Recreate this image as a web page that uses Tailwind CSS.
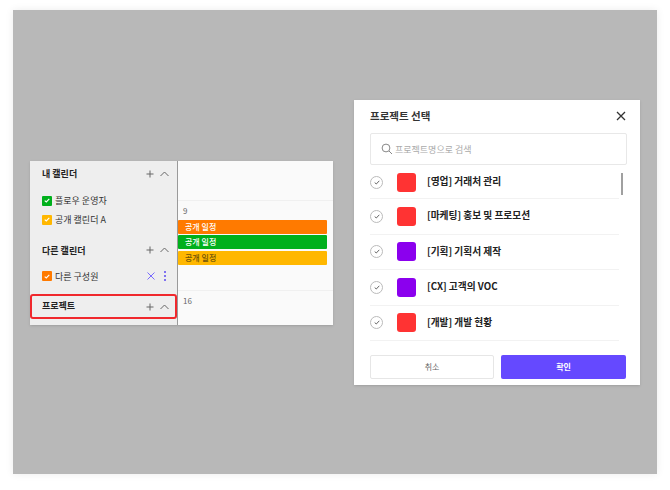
<!DOCTYPE html>
<html>
<head>
  <meta charset="UTF-8" />
  <script src="https://cdn.jsdelivr.net/npm/@tailwindcss/browser@4"></script>
</head>
<body class="bg-white">
<div class="w-[670px] h-[490px] overflow-hidden pt-[10px] pl-[13px] font-['Noto_Sans_CJK_KR','Noto_Sans',sans-serif]">
  <div class="w-[644px] h-[464px] bg-[#b8b8b8] shadow-[0_0_8px_rgba(0,0,0,0.08)] flex items-start pl-[17px] pt-[90px]">

    <!-- calendar -->
    <div class="mt-[61px] w-[303px] h-[164px] flex bg-[#fafafa] shadow-sm">
      <div class="w-[147px] bg-[#eeeeee] shrink-0 flex flex-col">
        <div class="h-[25px] pl-[12px] pr-[8px] flex items-center justify-between">
          <span class="text-[9px] font-bold text-[#222] leading-none">내 캘린더</span>
          <div class="flex items-center gap-[6px]">
            <svg width="8" height="8" viewBox="0 0 8 8" fill="none" stroke="#666" stroke-width="1"><path d="M4 0.5V7.5M0.5 4H7.5"/></svg>
            <svg width="9" height="6" viewBox="0 0 9 6" fill="none" stroke="#666" stroke-width="1"><path d="M0.5 5L4.5 1L8.5 5"/></svg>
          </div>
        </div>
        <div class="mt-[5px] h-[19px] pl-[12px] flex items-center gap-[3px]">
          <span class="w-[10px] h-[10px] rounded-[1px] bg-[#00b01c] flex items-center justify-center"><svg width="6" height="5" viewBox="0 0 6 5" fill="none" stroke="#fff" stroke-width="1.1"><path d="M0.7 2.6L2.3 4L5.3 0.8"/></svg></span>
          <span class="text-[9px] text-[#333] leading-none">플로우 운영자</span>
        </div>
        <div class="h-[19px] pl-[12px] flex items-center gap-[3px]">
          <span class="w-[10px] h-[10px] rounded-[1px] bg-[#ffb700] flex items-center justify-center"><svg width="6" height="5" viewBox="0 0 6 5" fill="none" stroke="#fff" stroke-width="1.1"><path d="M0.7 2.6L2.3 4L5.3 0.8"/></svg></span>
          <span class="text-[9px] text-[#333] leading-none">공개 캘린더 A</span>
        </div>
        <div class="mt-[11px] h-[20px] pl-[12px] pr-[8px] flex items-center justify-between">
          <span class="text-[9px] font-bold text-[#222] leading-none">다른 캘린더</span>
          <div class="flex items-center gap-[6px]">
            <svg width="8" height="8" viewBox="0 0 8 8" fill="none" stroke="#666" stroke-width="1"><path d="M4 0.5V7.5M0.5 4H7.5"/></svg>
            <svg width="9" height="6" viewBox="0 0 9 6" fill="none" stroke="#666" stroke-width="1"><path d="M0.5 5L4.5 1L8.5 5"/></svg>
          </div>
        </div>
        <div class="mt-[6px] h-[20px] pl-[12px] pr-[11px] flex items-center">
          <span class="w-[10px] h-[10px] rounded-[1px] bg-[#ff7a00] flex items-center justify-center"><svg width="6" height="5" viewBox="0 0 6 5" fill="none" stroke="#fff" stroke-width="1.1"><path d="M0.7 2.6L2.3 4L5.3 0.8"/></svg></span>
          <span class="ml-[3px] text-[9px] text-[#333] leading-none">다른 구성원</span>
          <svg class="ml-auto" width="8" height="8" viewBox="0 0 8 8" fill="none" stroke="#6a5aff" stroke-width="0.9"><path d="M0.5 0.5L7.5 7.5M7.5 0.5L0.5 7.5"/></svg>
          <span class="ml-[9px] flex flex-col gap-[2px]">
            <span class="w-[2px] h-[2px] rounded-full bg-[#5b48f0]"></span>
            <span class="w-[2px] h-[2px] rounded-full bg-[#5b48f0]"></span>
            <span class="w-[2px] h-[2px] rounded-full bg-[#5b48f0]"></span>
          </span>
        </div>
        <div class="mt-[8px] h-[25px] pl-[10px] pr-[6px] flex items-center justify-between border-2 border-[#f0282d] rounded-[3px]">
          <span class="text-[9px] font-bold text-[#222] leading-none -mt-[2px]">프로젝트</span>
          <div class="flex items-center gap-[6px]">
            <svg width="8" height="8" viewBox="0 0 8 8" fill="none" stroke="#666" stroke-width="1"><path d="M4 0.5V7.5M0.5 4H7.5"/></svg>
            <svg width="9" height="6" viewBox="0 0 9 6" fill="none" stroke="#666" stroke-width="1"><path d="M0.5 5L4.5 1L8.5 5"/></svg>
          </div>
        </div>
      </div>
      <div class="w-px bg-[#9a9a9a] shrink-0"></div>
      <div class="flex-1 flex flex-col">
        <div class="h-[40px] border-b border-[#f0f0f0]"></div>
        <div class="h-[90px] border-b border-[#f0f0f0] pr-[6px]">
          <div class="h-[19px] pl-[5px] pt-[4px] text-[8px] leading-[12px] text-[#666]">9</div>
          <div class="h-[14px] rounded-[1px] bg-[#ff7a00] pl-[7px] flex items-center text-[8px] font-medium text-white leading-none">공개 일정</div>
          <div class="mt-px h-[14px] rounded-[1px] bg-[#00b01c] pl-[7px] flex items-center text-[8px] font-medium text-white leading-none">공개 일정</div>
          <div class="mt-[2px] h-[14px] rounded-[1px] bg-[#ffb700] pl-[7px] flex items-center text-[8px] font-medium text-[#6e5208] leading-none">공개 일정</div>
        </div>
        <div class="pl-[5px] pt-[4px] text-[8px] leading-[12px] text-[#666]">16</div>
      </div>
    </div>

    <!-- modal -->
    <div class="ml-[21px] w-[286px] h-[285px] bg-white shadow-sm pt-[8px] pl-[16px] pr-[13px] flex flex-col">
      <div class="h-[16px] flex items-center justify-between">
        <span class="text-[10.5px] font-bold text-[#333] leading-none">프로젝트 선택</span>
        <svg class="mr-[1px]" width="10" height="10" viewBox="0 0 10 10" fill="none" stroke="#333" stroke-width="1.3"><path d="M1 1L9 9M9 1L1 9"/></svg>
      </div>
      <div class="mt-[9px] w-[257px] h-[32px] border border-[#e8e8e8] rounded-[2px] pl-[10px] flex items-center gap-[2px]">
        <svg width="12" height="12" viewBox="0 0 12 12" fill="none" stroke="#888" stroke-width="1"><circle cx="5" cy="5" r="3.9"/><path d="M8 8L11 11"/></svg>
        <span class="text-[9px] text-[#aaa] leading-none">프로젝트명으로 검색</span>
      </div>
      <div class="relative w-[249px] mt-px">
        <span class="absolute right-[-4px] top-[7px] w-[2px] h-[22px] bg-[#a0a0a0]"></span>
        <div class="h-[33px] border-b border-[#f2f2f2] flex items-center">
          <span class="w-[13px] h-[13px] rounded-full border border-[#bbb] flex items-center justify-center"><svg width="6" height="5" viewBox="0 0 6 5" fill="none" stroke="#666" stroke-width="1"><path d="M0.7 2.6L2.3 4L5.3 0.8"/></svg></span>
          <span class="ml-[14px] w-[19px] h-[19px] rounded-[3px] bg-[#ff3333]"></span>
          <span class="ml-[11px] text-[9.7px] font-bold text-[#222] leading-none">[영업] 거래처 관리</span>
        </div>
        <div class="h-[35.5px] border-b border-[#f2f2f2] flex items-center">
          <span class="w-[13px] h-[13px] rounded-full border border-[#bbb] flex items-center justify-center"><svg width="6" height="5" viewBox="0 0 6 5" fill="none" stroke="#666" stroke-width="1"><path d="M0.7 2.6L2.3 4L5.3 0.8"/></svg></span>
          <span class="ml-[14px] w-[19px] h-[19px] rounded-[3px] bg-[#ff3333]"></span>
          <span class="ml-[11px] text-[9.7px] font-bold text-[#222] leading-none">[마케팅] 홍보 및 프로모션</span>
        </div>
        <div class="h-[35.5px] border-b border-[#f2f2f2] flex items-center">
          <span class="w-[13px] h-[13px] rounded-full border border-[#bbb] flex items-center justify-center"><svg width="6" height="5" viewBox="0 0 6 5" fill="none" stroke="#666" stroke-width="1"><path d="M0.7 2.6L2.3 4L5.3 0.8"/></svg></span>
          <span class="ml-[14px] w-[19px] h-[19px] rounded-[3px] bg-[#8b00ee]"></span>
          <span class="ml-[11px] text-[9.7px] font-bold text-[#222] leading-none">[기획] 기획서 제작</span>
        </div>
        <div class="h-[35.5px] border-b border-[#f2f2f2] flex items-center">
          <span class="w-[13px] h-[13px] rounded-full border border-[#bbb] flex items-center justify-center"><svg width="6" height="5" viewBox="0 0 6 5" fill="none" stroke="#666" stroke-width="1"><path d="M0.7 2.6L2.3 4L5.3 0.8"/></svg></span>
          <span class="ml-[14px] w-[19px] h-[19px] rounded-[3px] bg-[#8b00ee]"></span>
          <span class="ml-[11px] text-[9.7px] font-bold text-[#222] leading-none">[CX] 고객의 VOC</span>
        </div>
        <div class="h-[35.5px] border-b border-[#f2f2f2] flex items-center">
          <span class="w-[13px] h-[13px] rounded-full border border-[#bbb] flex items-center justify-center"><svg width="6" height="5" viewBox="0 0 6 5" fill="none" stroke="#666" stroke-width="1"><path d="M0.7 2.6L2.3 4L5.3 0.8"/></svg></span>
          <span class="ml-[14px] w-[19px] h-[19px] rounded-[3px] bg-[#ff3333]"></span>
          <span class="ml-[11px] text-[9.7px] font-bold text-[#222] leading-none">[개발] 개발 현황</span>
        </div>
      </div>
      <div class="mt-[14px] flex gap-[7px]">
        <div class="w-[124px] h-[24px] border border-[#e6e6e6] rounded-[2px] flex items-center justify-center text-[8px] text-[#666] leading-none">취소</div>
        <div class="w-[125px] h-[24px] bg-[#6549ff] rounded-[2px] flex items-center justify-center text-[8px] font-bold text-white leading-none">확인</div>
      </div>
    </div>
  </div>
</div>
</body>
</html>
